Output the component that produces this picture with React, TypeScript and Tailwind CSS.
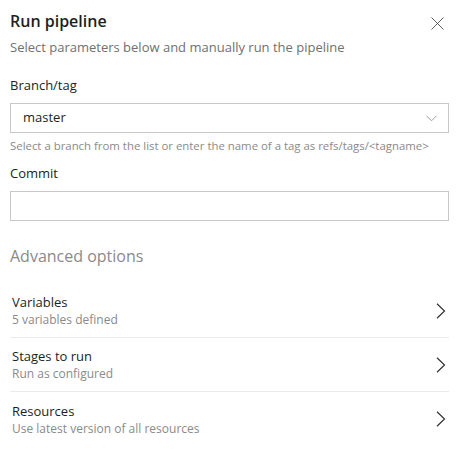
import { X } from "lucide-react";

const options = [
  { title: "Variables", sub: "5 variables defined" },
  { title: "Stages to run", sub: "Run as configured" },
  { title: "Resources", sub: "Use latest version of all resources" },
];

export default function App() {
  return (
    <div className="w-[461px] h-[450px] bg-white text-[#201f1e] font-['Open_Sans',sans-serif] overflow-hidden">
      <div className="pl-[10px] pr-[12px] pt-[10px]">
        <div className="flex items-start justify-between">
          <div>
            <h1 className="text-[16px] leading-[22px] font-semibold">Run pipeline</h1>
            <p className="mt-[6px] text-[13px] leading-[18px] text-[#707070]">
              Select parameters below and manually run the pipeline
            </p>
          </div>
          <button className="mt-[2px] mr-[0px] text-[#444]" aria-label="Close">
            <X className="w-[23px] h-[23px]" strokeWidth={0.9} />
          </button>
        </div>

        <label className="block mt-[20px] text-[13px] leading-[18px]">Branch/tag</label>
        <div className="mt-[9px] h-[30px] border border-[#c8c8c8] flex items-center justify-between pl-[12px] pr-[11px]">
          <span className="text-[13px]">master</span>
          <svg width="11" height="7" viewBox="0 0 11 7" fill="none" stroke="#a0a0a0" strokeWidth="1">
            <polyline points="0.5,0.8 5.5,5.8 10.5,0.8" />
          </svg>
        </div>
        <p className="mt-[6px] text-[11.4px] leading-[14px] text-[#8a8a8a]">
          Select a branch from the list or enter the name of a tag as refs/tags/&lt;tagname&gt;
        </p>

        <label className="block mt-[11px] text-[13px] leading-[18px]">Commit</label>
        <div className="mt-[9px] h-[30px] border border-[#c8c8c8]" />

        <h2 className="mt-[24px] text-[16px] leading-[22px] text-[#8a8a8a]">Advanced options</h2>

        <div className="mt-[17px]">
          {options.map((o, i) => (
            <div
              key={o.title}
              className={`h-[54px] flex items-center justify-between pl-[2px] pr-[3px] ${i < options.length - 1 ? "border-b border-[#eaeaea]" : ""}`}
            >
              <div>
                <div className="text-[13px] leading-[18px]">{o.title}</div>
                <div className="text-[12px] leading-[17px] text-[#8a8a8a]">{o.sub}</div>
              </div>
              <svg width="10" height="16" viewBox="0 0 10 16" fill="none" stroke="#333" strokeWidth="1.2">
                <polyline points="1,0.8 8.5,8 1,15.2" />
              </svg>
            </div>
          ))}
        </div>
      </div>
    </div>
  );
}
